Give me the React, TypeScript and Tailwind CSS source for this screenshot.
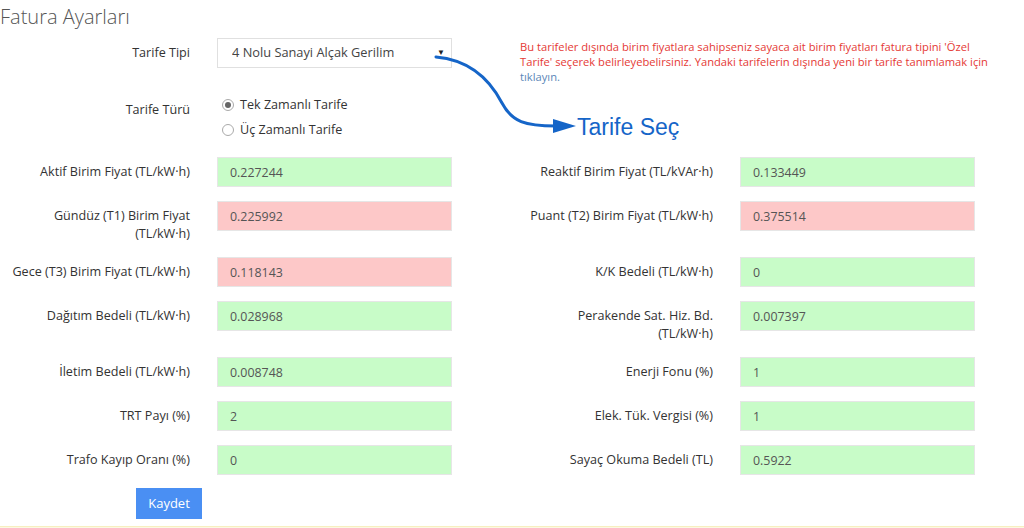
import React from 'react';

interface Field {
  label: React.ReactNode;
  value: string;
  tone: 'green' | 'red';
}

const leftFields: Field[] = [
  { label: 'Aktif Birim Fiyat (TL/kW·h)', value: '0.227244', tone: 'green' },
  {
    label: (
      <>
        Gündüz (T1) Birim Fiyat
        <br />
        (TL/kW·h)
      </>
    ),
    value: '0.225992',
    tone: 'red',
  },
  { label: 'Gece (T3) Birim Fiyat (TL/kW·h)', value: '0.118143', tone: 'red' },
  { label: 'Dağıtım Bedeli (TL/kW·h)', value: '0.028968', tone: 'green' },
  { label: 'İletim Bedeli (TL/kW·h)', value: '0.008748', tone: 'green' },
  { label: 'TRT Payı (%)', value: '2', tone: 'green' },
  { label: 'Trafo Kayıp Oranı (%)', value: '0', tone: 'green' },
];

const rightFields: Field[] = [
  { label: 'Reaktif Birim Fiyat (TL/kVAr·h)', value: '0.133449', tone: 'green' },
  { label: 'Puant (T2) Birim Fiyat (TL/kW·h)', value: '0.375514', tone: 'red' },
  { label: 'K/K Bedeli (TL/kW·h)', value: '0', tone: 'green' },
  {
    label: (
      <>
        Perakende Sat. Hiz. Bd.
        <br />
        (TL/kW·h)
      </>
    ),
    value: '0.007397',
    tone: 'green',
  },
  { label: 'Enerji Fonu (%)', value: '1', tone: 'green' },
  { label: 'Elek. Tük. Vergisi (%)', value: '1', tone: 'green' },
  { label: 'Sayaç Okuma Bedeli (TL)', value: '0.5922', tone: 'green' },
];

const FieldRow: React.FC<{ field: Field }> = ({ field }) => (
  <div className="flex items-start">
    <label className="ml-[2px] w-[188px] whitespace-nowrap pt-[6px] text-right text-[12.6px] leading-[18px] text-[#333]">
      {field.label}
    </label>
    <input
      readOnly
      value={field.value}
      className={`ml-[27px] h-[30px] w-[235px] border border-[#e6e6e6] pl-[12px] text-[12.4px] text-[#555] outline-none ${
        field.tone === 'green' ? 'bg-[#c8fcc8]' : 'bg-[#fdc8c8]'
      }`}
    />
  </div>
);

const App: React.FC = () => {
  const rows = leftFields.map((f, i) => [f, rightFields[i]]);

  return (
    <div className="relative flex h-[528px] w-full flex-col overflow-hidden bg-white font-['Open_Sans',sans-serif]">
      <h1 className="pt-[2px] text-[20px] font-light leading-[30px] text-[#555]">Fatura Ayarları</h1>

      <div className="mt-[6px] flex">
        <div className="w-[520px]">
          <div className="flex items-start">
            <span className="ml-[2px] w-[188px] pt-[6px] text-right text-[12.6px] leading-[18px] text-[#333]">
              Tarife Tipi
            </span>
            <div className="relative ml-[27px] w-[235px]">
              <select className="h-[30px] w-full appearance-none border border-[#e0e0e0] bg-white pl-[14px] text-[12.8px] text-[#444] outline-none">
                <option>4 Nolu Sanayi Alçak Gerilim</option>
              </select>
              <span className="pointer-events-none absolute right-[7px] top-[8px] text-[8px] text-[#222]">▼</span>
            </div>
          </div>

          <div className="mt-[26px] flex items-start">
            <span className="ml-[2px] w-[188px] pt-[7px] text-right text-[12.6px] leading-[18px] text-[#333]">
              Tarife Türü
            </span>
            <div className="ml-[32px] flex flex-col gap-[3px] text-[12.6px] leading-[22px] text-[#333]">
              <div className="flex items-center gap-[6px]">
                <span className="flex h-[12px] w-[12px] items-center justify-center rounded-full border border-[#aaa] bg-white">
                  <span className="h-[6px] w-[6px] rounded-full bg-[#666]" />
                </span>
                Tek Zamanlı Tarife
              </div>
              <div className="flex items-center gap-[6px]">
                <span className="h-[12px] w-[12px] rounded-full border border-[#aaa] bg-white" />
                Üç Zamanlı Tarife
              </div>
            </div>
          </div>
        </div>

        <p className="mt-[1px] whitespace-nowrap text-[11.2px] leading-[15px] text-[#e53935]">
          Bu tarifeler dışında birim fiyatlara sahipseniz sayaca ait birim fiyatları fatura tipini 'Özel
          <br />
          Tarife' seçerek belirleyebelirsiniz. Yandaki tarifelerin dışında yeni bir tarife tanımlamak için
          <br />
          <span className="text-[#5b87b8]">tıklayın.</span>
        </p>
      </div>

      <div className="mt-[16px] grid grid-cols-[523px_501px] gap-y-[14px]">
        {rows.map(([l, r], i) => (
          <React.Fragment key={`row-${i}`}>
            <FieldRow field={l} />
            <FieldRow field={r} />
          </React.Fragment>
        ))}
      </div>

      <div className="mt-[13px] pl-[136px]">
        <button className="h-[31px] w-[66px] bg-[#4a8ff3] text-[13px] text-white">Kaydet</button>
      </div>

      <div className="mt-[7px] h-[2px] border-t border-[#f7efc0] bg-[#fcf8e3]" />

      {/* annotation */}
      <svg className="pointer-events-none absolute left-0 top-0" width="1024" height="528">
        <path
          d="M436 57 C470 60 490 80 502 103 C512 122 525 126 556 126"
          fill="none"
          stroke="#1565c8"
          strokeWidth="3"
          strokeLinecap="round"
        />
        <polygon points="553,119 576,126 553,133" fill="#1565c8" />
      </svg>
      <span className="absolute left-[577px] top-[113px] font-['Liberation_Sans',Arial,sans-serif] text-[23px] leading-[28px] text-[#1565c8]">
        Tarife Seç
      </span>
    </div>
  );
};

export default App;
